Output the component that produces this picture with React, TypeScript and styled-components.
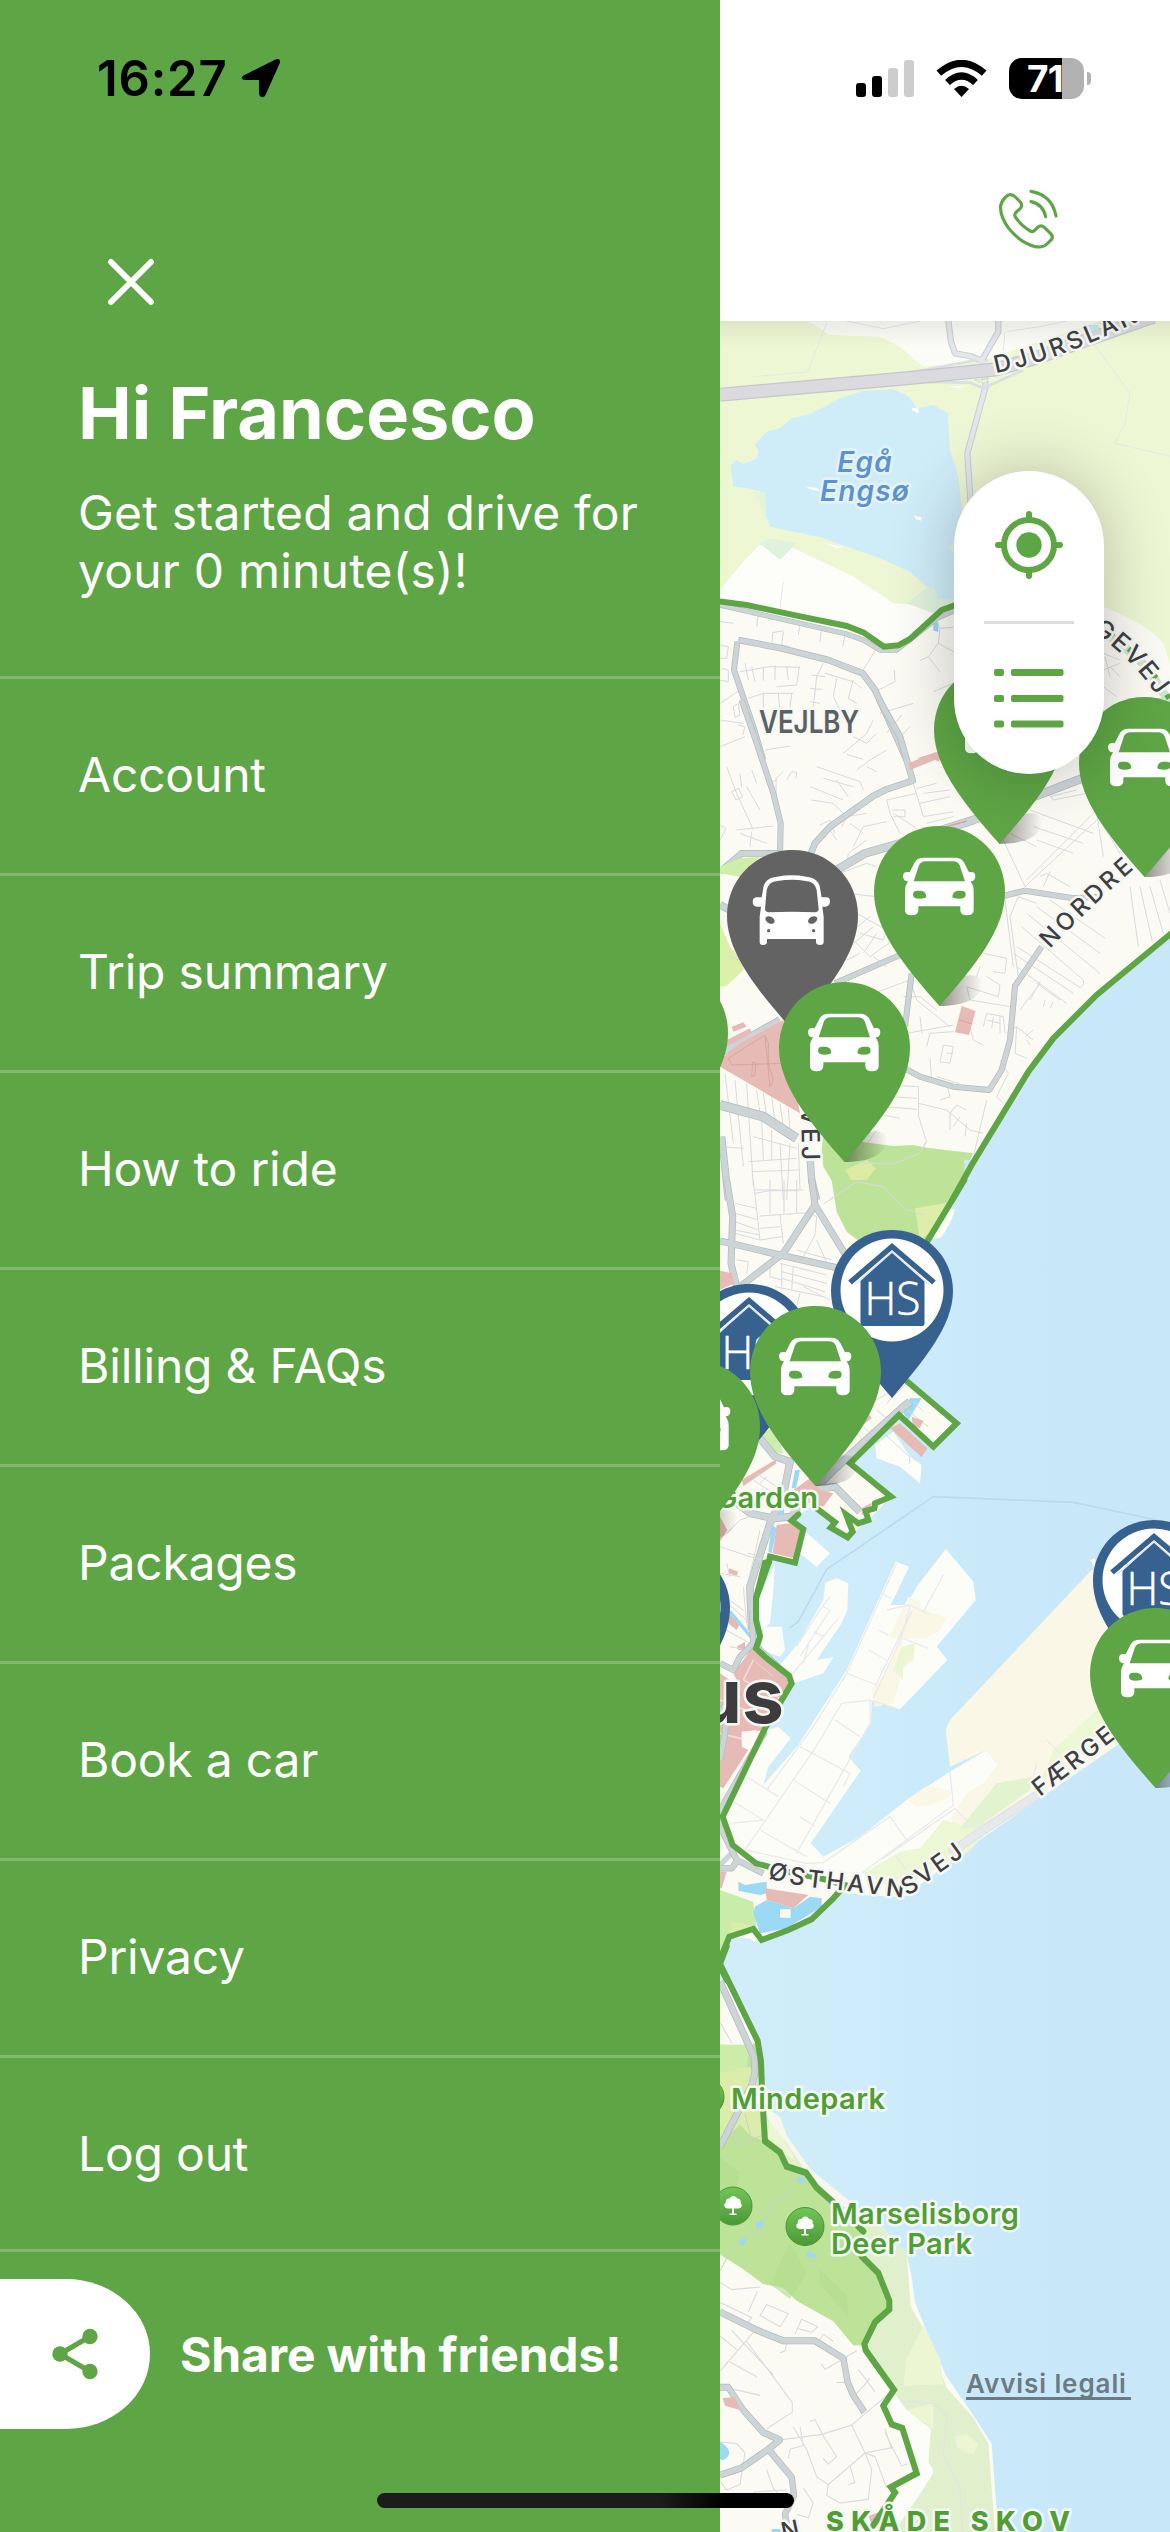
import React from "react";
import styled, { createGlobalStyle } from "styled-components";

const GREEN = "#5ea545";
const NAVY = "#37618f";
const FONT = `Inter, "Liberation Sans", sans-serif`;

const GlobalStyle = createGlobalStyle`
  * { box-sizing: border-box; }
  body { margin: 0; background: #fff; }
`;

const Screen = styled.div`
  position: relative;
  display: grid;
  grid-template-columns: 720px 450px;
  width: 1170px;
  height: 2532px;
  overflow: hidden;
  font-family: ${FONT};
`;

/* ---------- drawer ---------- */

const Drawer = styled.aside`
  display: flex;
  flex-direction: column;
  background: ${GREEN};
  color: #fff;
`;

const DrawerTop = styled.header`
  display: flex;
  flex-direction: column;
  align-items: flex-start;
  height: 676px;
  padding: 48px 60px 0 78px;
`;

const Clock = styled.div`
  display: flex;
  align-items: center;
  gap: 14px;
  height: 60px;
  padding-left: 19px;
  color: #000;
  font-size: 49px;
  font-weight: 600;
  letter-spacing: 0.8px;
`;

const CloseButton = styled.button`
  display: flex;
  margin: 150px 0 0 29px;
  padding: 0;
  border: 0;
  background: none;
`;

const Greeting = styled.h1`
  margin: 64px 0 0;
  font-size: 72px;
  line-height: 86px;
  font-weight: 700;
  letter-spacing: -0.05px;
  white-space: nowrap;
`;

const Intro = styled.p`
  margin: 28px 0 0;
  font-size: 48px;
  line-height: 58px;
  font-weight: 400;
  letter-spacing: 0.2px;
  white-space: nowrap;
`;

const Menu = styled.nav`
  display: flex;
  flex-direction: column;
`;

const MenuItem = styled.a`
  display: flex;
  align-items: center;
  height: 197px;
  padding: 0 0 3px 78px;
  border-top: 3px solid #82b96e;
  font-size: 48px;
  font-weight: 400;
  letter-spacing: -0.2px;

  &:last-child {
    padding-bottom: 0;
    border-bottom: 3px solid #82b96e;
  }
`;

const ShareRow = styled.div`
  display: flex;
  align-items: center;
  gap: 30px;
  height: 150px;
  margin-top: 27px;
`;

const ShareTab = styled.div`
  display: flex;
  align-items: center;
  width: 150px;
  height: 150px;
  padding-left: 50px;
  border-radius: 0 84px 84px 0 / 0 75px 75px 0;
  background: #fff;
`;

const ShareLabel = styled.span`
  font-size: 48px;
  font-weight: 700;
  letter-spacing: -0.15px;
  white-space: nowrap;
`;

/* ---------- right side ---------- */

const Main = styled.main`
  display: flex;
  flex-direction: column;
  min-width: 0;
`;

const TopBar = styled.header`
  display: flex;
  flex-direction: column;
  height: 321px;
  background: #fff;
`;

const StatusIcons = styled.div`
  display: flex;
  align-items: center;
  height: 60px;
  margin-top: 48px;
  padding-left: 136px;
`;

const Signal = styled.div`
  display: flex;
  align-items: flex-end;
  gap: 6px;
  height: 37px;
  margin-right: 22px;
`;

const Bar = styled.i<{ $h: number; $on?: boolean }>`
  width: 10px;
  height: ${(p) => p.$h}px;
  border-radius: 3px;
  background: ${(p) => (p.$on ? "#000" : "#ccc")};
`;

const Battery = styled.div`
  display: flex;
  align-items: center;
  justify-content: center;
  width: 75px;
  height: 41px;
  margin: 0 3px 0 22px;
  padding-right: 3px;
  border-radius: 13px;
  background: linear-gradient(90deg, #000 53px, #b1b1b1 53px);
  color: #fff;
  font-size: 37px;
  font-weight: 700;
  letter-spacing: -0.8px;
`;

const BatteryNub = styled.i`
  width: 4px;
  height: 13px;
  border-radius: 0 5px 5px 0;
  background: #b1b1b1;
`;

const CallButton = styled.button`
  display: flex;
  margin: 80px 0 0 277px;
  padding: 0;
  border: 0;
  background: none;
`;

const MapArea = styled.section`
  position: relative;
  height: 2211px;
  overflow: hidden;

  &::after {
    content: "";
    position: absolute;
    inset: 0 0 auto;
    height: 26px;
    background: linear-gradient(rgba(0, 0, 0, 0.07), rgba(0, 0, 0, 0));
  }
`;

const MapCanvas = styled.svg`
  display: block;
`;

const Pin = styled.svg<{ $x: number; $y: number }>`
  position: absolute;
  left: ${(p) => p.$x - 720}px;
  top: ${(p) => p.$y - 321}px;
  overflow: visible;
`;

const Controls = styled.div`
  position: absolute;
  left: 234px;
  top: 150px;
  display: flex;
  flex-direction: column;
  align-items: center;
  width: 150px;
  height: 303px;
  padding-top: 39px;
  border-radius: 75px;
  background: #fff;
  box-shadow: 0 0 66px rgba(0, 0, 0, 0.24);
`;

const ControlDivider = styled.i`
  width: 90px;
  height: 3px;
  margin: 41px 0 45px;
  background: #dcdcdc;
`;

const Legal = styled.a`
  position: absolute;
  left: 246px;
  top: 2047px;
  width: 165px;
  padding-top: 2px;
  border-bottom: 3px solid #6c7a83;
  color: #6c7a83;
  font-size: 26px;
  line-height: 27px;
  font-weight: 600;
  letter-spacing: 0.9px;
  white-space: nowrap;
`;

const HomeIndicator = styled.div`
  position: absolute;
  left: 377px;
  top: 2493px;
  width: 417px;
  height: 15px;
  border-radius: 8px;
  background: linear-gradient(90deg, #1c1c1c 68%, #000 84%);
`;

/* ---------- markers ---------- */

const CarPin = ({ x, y }: { x: number; y: number }) => (
  <Pin $x={x} $y={y} width="131" height="180" viewBox="0 0 131 180">
    <path d="M65 180L88 150C104 147 110 153 108 161C104 174 88 180 65 180Z" fill="url(#pinShade)" />
    <path d="M65.500 0C29 0 0 29 0 66C0 103 30 140 65.500 180C101 140 131 103 131 66C131 29 102 0 65.500 0Z" fill={GREEN} />
    <g transform="scale(.33333) translate(-463 -377)">
      <path fill="#fff" d="M612 472H706Q726 472 734 488L748 516Q767 512 767 528Q767 543 753 543Q762 556 762 570V630Q762 645 742 645Q722 645 722 630V618H596V630Q596 645 576 645Q556 645 556 630V570Q556 556 565 543Q550 543 550 528Q550 512 570 516L584 488Q592 472 612 472Z" />
      <path fill={GREEN} d="M618 483H700Q714 483 720 495L736 543H582L598 495Q604 483 618 483Z" />
      <path fill={GREEN} d="M592 571H604Q620 574 620 590Q616 595 600 595Q580 595 580 583Q580 571 592 571ZM726 571H714Q698 574 698 590Q702 595 718 595Q738 595 738 583Q738 571 726 571Z" />
    </g>
  </Pin>
);

const BusPin = ({ x, y }: { x: number; y: number }) => (
  <Pin $x={x} $y={y} width="131" height="180" viewBox="0 0 131 180">
    <path d="M65.500 0C29 0 0 29 0 66C0 103 30 140 65.500 180C101 140 131 103 131 66C131 29 102 0 65.500 0Z" fill="#636363" />
    <g transform="scale(.33333) translate(-20 -450)">
      <path fill="#fff" d="M170 530Q214 522 258 530Q298 534 300 570L304 592H318Q329 592 329 604Q329 618 316 620H306L310 650V726Q310 735 299 735Q287 735 287 726V717H140V726Q140 735 128 735Q118 735 118 726V650L122 620H110Q97 618 97 606Q97 592 110 592H124L128 570Q130 534 170 530Z" />
      <path fill="#636363" d="M172 543Q214 536 256 543Q284 545 289 570L295 628Q294 636 284 637Q214 634 146 637Q134 636 134 628L139 570Q144 545 172 543Z" />
      <g fill="#636363">
        <ellipse cx="149" cy="660" rx="15" ry="10" transform="rotate(30 149 660)" />
        <ellipse cx="277" cy="660" rx="15" ry="10" transform="rotate(-30 277 660)" />
        <circle cx="145" cy="692" r="5" />
        <circle cx="280" cy="692" r="5" />
      </g>
    </g>
  </Pin>
);

const HousePin = ({ x, y }: { x: number; y: number }) => (
  <Pin $x={x} $y={y} width="122" height="168" viewBox="0 0 122 168">
    <path d="M61 0C27 0 0 27 0 61C0 96 29 130 61 168C93 130 122 96 122 61C122 27 95 0 61 0Z" fill={NAVY} />
    <circle cx="61" cy="60" r="51.500" fill="#fff" />
    <path d="M29.500 51L61 21.500L93.500 51V94Q93.500 96 91 96H32Q29.500 96 29.500 94Z" fill={NAVY} />
    <path d="M19 52.500L61 16.500L103 52.500" fill="none" stroke={NAVY} strokeWidth="5.500" />
    <path d="M24 54.500L61 22L98 54.500" fill="none" stroke="#dfe7ef" strokeWidth="1.600" />
    <text x="33.500" y="85" fontFamily={`"Open Sans", Lato, sans-serif`} fontSize="46" fontWeight="300" fill="#fff" stroke="#fff" strokeWidth=".6" textLength="56" lengthAdjust="spacingAndGlyphs">HS</text>
  </Pin>
);

/* ---------- map drawing ---------- */

type TileProps = { y: number; sy?: number; children: React.ReactNode };
const Tile = ({ y, sy = 1 / 3, children }: TileProps) => (
  <g transform={`translate(720 ${y}) scale(.33333 ${sy})`} fill="none" strokeLinejoin="round">
    {children}
  </g>
);

const Street = ({ d, c = "#d8dade", w = 3 }: { d: string; c?: string; w?: number }) => <path d={d} stroke={c} strokeWidth={w} />;

const Road = ({ d, w = 15 }: { d: string; w?: number }) => (
  <>
    <path d={d} stroke="#b1b9c0" strokeWidth={w + 3} />
    <path d={d} stroke="#cdd4d6" strokeWidth={w - 1} />
  </>
);

const Block = ({ d }: { d: string }) => <path d={d} fill="#e6bbb6" />;

const Border = ({ d }: { d: string }) => <path d={d} stroke={GREEN} strokeWidth="18" strokeLinejoin="miter" strokeLinecap="round" />;

const halo = { paintOrder: "stroke", stroke: "#f6f8f6", strokeWidth: 5, strokeLinejoin: "round" } as const;

const RoadName = ({ id, d, size = 24, gap = 3, children }: { id: string; d: string; size?: number; gap?: number; children: string }) => (
  <>
    <path id={id} d={d} fill="none" />
    <text fontSize={size} fontWeight="500" letterSpacing={gap} fill="#3f3f3f" {...halo}>
      <textPath href={`#${id}`}>{children}</textPath>
    </text>
  </>
);

const Tree = ({ x, y }: { x: number; y: number }) => (
  <g transform={`translate(${x} ${y})`}>
    <circle r="19" fill="url(#treeFill)" stroke="#4b9436" strokeWidth="1" />
    <path d="M-5 2.500C-9 2.500-10-2-7-3.500C-8-6.500-5-8-3.500-7.500C-2-11 3-11 4-7.500C7-8 8.500-5 7.500-3C10-1 9 2.500 5 2.500L1 2.500V7.500H3.500V9H-3.500V7.500H-1V2.500Z" fill="#fff" />
  </g>
);

const CityMap = () => (
  <MapCanvas width="450" height="2211" viewBox="720 321 450 2211" fontFamily={FONT}>
    <defs>
      <linearGradient id="sea" gradientUnits="userSpaceOnUse" x1="0" x2="1350" y1="0" y2="0">
        <stop offset="0" stopColor="#d0edf9" />
        <stop offset=".3" stopColor="#ceecf9" />
        <stop offset=".6" stopColor="#c9e9fa" />
        <stop offset="1" stopColor="#c8e8fa" />
      </linearGradient>
      <linearGradient id="treeFill" x1="0" x2="0" y1="0" y2="1">
        <stop offset="0" stopColor="#72c556" />
        <stop offset="1" stopColor="#4a9a35" />
      </linearGradient>
      <linearGradient id="pinShade" x1="0" x2="1" y1="0" y2="0">
        <stop offset="0" stopColor="#000" stopOpacity=".42" />
        <stop offset="1" stopColor="#000" stopOpacity="0" />
      </linearGradient>
    </defs>

    <rect x="720" y="321" width="450" height="2211" fill="#fbfaf3" />

    {/* northern fields and lake */}
    <Tile y={310}>
      <path d="M0 0H1350V1060L1330 1000Q1280 940 1150 890L1000 830L700 880L590 890L520 880L400 800L210 710L120 705L80 745L0 840Z" fill="#eef7d4" />
      <path d="M265 33L330 75L480 80L540 110L610 170L790 150L960 95L1140 33Z" fill="#fcfcf6" />
      <path d="M0 840L80 745L120 705L210 710L400 800L520 880L700 890L720 940L500 1010L400 950L0 870Z" fill="#fdfdf9" />
      <path d="M120 700L150 685L230 700L180 750ZM560 880L640 820L720 860L700 900L640 910Z" fill="#dff2dc" />
      <path d="M32 465L50 450L70 462L110 445L115 420L103 405L140 365L180 355L215 325L270 313L370 260L430 243L520 237L565 258L590 295L640 285L683 310L690 420L715 500L730 640L720 870L655 865L640 830L620 830L570 785L480 745L380 710L300 682L150 650L138 620L135 548L85 535L40 530Z" fill="#cfedf9" />
      <path d="M575 293L597 296L595 310L578 303ZM582 616L605 622L604 632L586 628ZM258 530L290 533L300 543L275 540ZM315 700L368 710L350 716ZM683 228L735 228L715 234Z" fill="#fdfdf9" />
      <path d="M135 548L100 545L135 620ZM685 710L710 700V735Z" fill="#e4f4d6" />
      <path d="M0 890L380 975L490 1025L540 1018L690 905L720 880V1350H1350V1100L1150 960L1110 900L720 1350H0Z" fill="#fbfaf3" />
      <Street d="M320 40L262 186L100 200M380 33L490 56L600 33M855 65L850 120M860 65L960 50L1040 33M1120 100L1230 250L1215 340L1184 400L1350 438M190 816L178 905" c="#e5e6ea" />
      <path d="M685 33L693 95L705 130L750 138L800 158M835 33V65L795 135L780 160M790 170L797 230L783 280L742 430L752 580" stroke="#c9cdd2" strokeWidth="19" />
      <path d="M685 33L693 95L705 130L750 138L800 158M835 33V65L795 135L780 160M790 170L797 230L783 280L742 430L752 580" stroke="#e3e6ea" strokeWidth="13" />
      <path d="M560 190L770 150M560 215L750 218L790 235L910 180" stroke="#dcdfe2" strokeWidth="8" />
      <path d="M0 254L570 204L830 178L960 140L1100 90L1300 20" stroke="#c5c6cb" strokeWidth="42" />
      <path d="M0 254L570 204L830 178L960 140L1100 90L1300 20" stroke="#dadadf" strokeWidth="35" />
      <path d="M762 207Q782 215 805 205Q800 222 785 218Q770 217 762 207Z" fill="#eef7d4" stroke="#c9cdd2" strokeWidth="2" />
      <path d="M1105 45H1135V60L1110 65Z" fill="#c5e8f7" />
      <Street d="M0 934L40 940M115 915L110 950M240 940L235 975M305 950L300 995M375 975L368 1010M465 1022L425 1088M60 1085L150 1070L240 1072M75 1060L85 1110M95 1070L105 1115M130 1070V1112M165 1065V1110M200 1068L205 1110M238 1070L230 1125L170 1130M155 1020L158 968L190 962M190 965L185 1005L210 1010M310 1060L290 1100L280 1190M275 1095L315 1100M270 1135L305 1138M270 1175L300 1180M315 1090L400 1115L425 1135M350 1105L340 1160L360 1200M400 1110L385 1165L410 1180M85 1165L130 1150L220 1150M130 1150V1235M175 1150L180 1210M215 1150L205 1235M0 1005L25 1010L20 1045L0 1045M5 1075L25 1080V1115L0 1110M40 1190L55 1180L60 1215L45 1222ZM0 1180L60 1140M0 1230L70 1240M0 1310L75 1280M55 1245L75 1250L68 1275M475 1140L525 1115L523 1080M480 1210L580 1180M500 1270L545 1215M530 1290L570 1250M370 1330L440 1270L460 1230M380 1333L430 1348M400 1280L440 1300L470 1270M135 1320L210 1308M650 935L660 955L700 952M660 955L655 1000L625 1040L600 1052M625 1040L660 1085M655 1000L710 1030M700 1120L640 1145" c="#d6d8de" />
      <Street d="M1150 1030L1200 1050M1150 1080L1200 1060M1155 1040L1170 1100M1150 1130L1190 1160M1200 1100L1170 1070" />
      <Road d="M0 885L130 915L380 972L430 990L480 1020H530L600 965L650 925L720 895" w={13} />
      <Road d="M55 990L180 1014L325 1050L428 1090L465 1140L520 1260L560 1350" w={17} />
      <Road d="M52 995L42 1080L100 1250L130 1350" w={15} />
      <path d="M640 940L655 935V965L640 962Z" fill="#9dd6f2" />
      <path d="M590 1345L655 1325L660 1350Z" fill="#e6bbb6" />
      <Border d="M-10 873L80 885L230 917L380 948L430 967L492 1010L535 1006L570 987L665 900L720 880" />
      <path d="M1120 945L1200 1000L1280 1070L1350 1180" stroke="#cfe3cb" strokeWidth="26" />
      <path d="M1170 970L1230 1020L1310 1105L1350 1170" stroke={GREEN} strokeWidth="16" strokeDasharray="14 22" />
    </Tile>

    {/* Vejlby and the northern coast */}
    <Tile y={700}>
      <Street d="M200 240L215 215L230 217L228 235M168 300V235L190 215M145 250L170 240M20 200L50 280L100 390M60 220L65 260M95 210L110 250M80 260L120 330M35 275L55 265L68 290L48 300ZM0 375L18 385L0 420M50 390L160 378M60 400L140 430M90 440L95 395M290 200L420 245L430 270M310 235L400 260M270 260L370 300M275 300L340 310L370 340M350 240L385 290M300 375L330 360L345 400M330 390L350 420M365 380L380 350L440 340M390 370L430 400M400 440L430 380L500 365M380 500L385 460L440 420M500 300L590 280M500 300L510 340L540 400M515 330H555V350H520M520 340L590 385M580 250L610 350L700 335M590 265L650 250M600 310L690 290M610 280L690 270M620 370L700 350M410 210L450 180L500 150M440 200L470 215M360 520L440 490L470 500M380 580L470 590M410 640L500 690L490 720L420 700M400 690L450 650M390 740L460 680M400 720L450 770L520 720M430 760L470 700M460 770L500 800M380 780L420 760M340 850L380 910L570 840M570 840L590 900L690 980M550 890L600 890L650 930M600 950L606 1000M560 1000L700 975M630 1075L635 1140M620 1040L630 1000L700 995M670 1035L700 1040L690 1090L660 1085ZM680 1060H700M790 760L860 775L855 820L820 815M780 800L770 830M800 830L840 855L835 890L740 860M740 860L750 900L870 920M790 980L800 940L850 950L855 1000M800 960L840 970M820 950L815 985M840 950V1000M745 960L760 1020L790 1035M870 650L895 590L950 610M870 650L895 830M850 560L880 800M905 680L1090 840Q1095 860 1080 862L890 740M880 760L1060 880M920 640L1140 820M950 620L1140 760M990 600L1155 715M890 800L1040 910M950 850L1020 900M960 845L930 900M970 920L975 900M990 925L1000 905M900 930L960 850M885 1060L890 980L940 1020M885 1060L920 1075M915 1010L940 990M930 1035L920 1020M860 1000L890 980M840 1080L865 1120L830 1190L850 1210M800 1200L760 1370M500 1155L595 1160L596 1250L620 1325L600 1360L520 1392L425 1390L415 1370L470 1290M595 1210L680 1230L750 1290L790 1300M690 1290V1240L710 1215L740 1230M720 1250L700 1280M740 1270L735 1310M510 1190L590 1195M495 1220L590 1228M490 1245L540 1255M650 1130L715 1150L720 1170M680 1150L690 1190L660 1200M850 420L915 560M920 540L1130 330M915 560L1130 360M930 330L1120 400M940 380L1090 430M950 420L1060 460M960 530L980 520L1050 560M990 515L970 560M870 400L950 440M1130 340L1150 470M1140 360L1200 460M1230 560L1255 740M1260 560L1297 725M1290 560L1330 700M1320 540L1350 640M990 290L1070 270M985 280L1000 300L1100 280" />
      <Road d="M65 0L110 130L160 280L182 370L180 460" w={15} />
      <Road d="M478 0L540 110L578 242L500 268L460 288L330 380L285 430L265 480" w={17} />
      <Road d="M0 515L65 460H182" w={17} />
      <Road d="M350 510L435 460L540 430L760 360L1100 230" w={23} />
      <Road d="M345 850L540 765M850 588L915 572L1060 595L1130 590M965 740L885 858L870 1020L845 1110L808 1170L700 1160L600 1130L550 1103M575 820L555 980" w={15} />
      <path d="M565 190L645 157L660 165L658 185L645 180L570 210Z" fill="#e6bbb6" />
      <path d="M680 380L740 363" stroke="#dd9d98" strokeWidth="4" />
      <path d="M725 918L767 933L747 1005L705 997Z" fill="#e6bbb6" />
      <path d="M717 960L757 972" stroke="#dc9f9a" strokeWidth="3" />
      <path d="M0 500L60 475L120 470L60 530L0 520Z" fill="#cfeeaa" />
      <path d="M0 670L30 740L70 790V810L20 858L0 860Z" fill="#ddf0a9" />
      <Road d="M0 615L30 630M0 1060L180 960" w={20} />
      <path d="M0 1080L60 1030L190 960L240 1240L0 1100Z" fill="#e6bbb6" />
      <path d="M35 980L70 967L80 980L40 995ZM20 1020L90 985L95 1000L20 1040Z" fill="#e6bbb6" />
      <Street d="M25 1075L135 1005L145 1030V1090L160 1140L150 1160L135 1010M25 1075L35 1095L190 1090M95 1130L98 1085L108 1090L105 1125Z" c="#d6a5a5" />
      <Street d="M20 765L70 785M15 1120L40 1330M45 1140L70 1400M80 1150L100 1460M110 1170L120 1240M130 1180L140 1250M155 1190L165 1265M180 1210L190 1280M205 1225L210 1290M0 1340L70 1345M85 1385L230 1375M95 1415L240 1410M100 1470L250 1470M180 1330L190 1500M210 1330L200 1500M235 1330L240 1470M125 1260L130 1380M155 1290V1380M100 1310L230 1345" />
      <Road d="M0 1215L130 1250L230 1315" w={26} />
      <Road d="M5 1310L25 1500M270 1370L275 1440L290 1500" w={19} />
      <path d="M310 1300L380 1320L520 1338L580 1335L620 1343L760 1360L695 1500H348L340 1450L310 1400L305 1350Z" fill="#bce397" />
      <path d="M375 1410L440 1380L468 1405L440 1440L395 1440Z" fill="#ddecA5" />
      <Street d="M330 1500L415 1440L490 1460L530 1500M415 1370L425 1390L520 1392L600 1360L618 1325" />
      <path d="M1350 715L1130 893L1005 1020L930 1120L845 1260L702 1500H1350Z" fill="url(#sea)" />
    </Tile>

    {/* city centre and harbour front */}
    <Tile y={1180}>
      <path d="M733 -60H1350V1350H100L108 1255L150 1130L225 1148L250 1048L215 1022L280 975L345 1027L383 1072L445 1020L513 950L390 850L537 705L640 800L710 730L560 600L620 185L735 0Z" fill="url(#sea)" />
      <path d="M335 0H733L620 185H420L380 155L350 95Z" fill="#bce397" />
      <path d="M585 85L680 68L690 45L640 150L600 180Z" fill="#ddedaa" />
      <path d="M680 85L705 90L690 130L665 172L625 180Z" fill="#fdfdf9" />
      <Street d="M310 72L410 5L490 20L555 88L615 105M100 0L120 180M105 40L150 32H230M150 0V100M192 0V100M230 0V100M120 108L265 98M265 98L290 110L285 165L245 240M120 145L180 140M120 180L185 170M180 105L190 190M45 70L110 85M45 100L110 118M45 125L115 150M45 150L120 165M45 160L120 180M50 240L85 245L80 280M290 180L330 270M230 210L335 240M180 250L320 285M185 275L320 310M185 295L315 335M150 260V290L185 300M185 250V320M220 260L215 330M165 320L310 350M250 320L330 360M240 340L230 380" />
      <Road d="M20 0L38 110L33 250L55 340M0 183L180 225L380 270M275 0L285 75L190 220L60 320M285 75L380 230" w={18} />
      <Block d="M0 272L35 280L42 310L0 330ZM430 720L450 705L455 715L430 735Z" />
      <path d="M125 760L165 740L190 820L160 820Z" fill="#cdeeac" />
      <path d="M570 655L605 655L565 720L550 700Z" fill="#9bd9f5" />
      <Street d="M560 690L625 740M580 665L610 695M450 670L540 620M430 740L480 790M410 760L460 810M395 840L540 690M500 670L560 610M470 690L520 730" />
      <Road d="M570 665L540 690L340 870L280 930" w={22} />
      <Road d="M120 775L165 830L210 845L195 920L165 1000L150 1030L90 1220L95 1350M0 930L90 1000L160 1015L215 1010L270 930L345 920L420 995" w={20} />
      <path d="M225 870L240 870L228 925L215 925ZM178 960H192V1005H178ZM155 1035L170 1045L155 1120L145 1115Z" fill="#9bd9f5" />
      <Block d="M220 930L270 895L300 930L340 940L310 980L270 970L235 960ZM170 1035L210 1030L245 1050L222 1135L158 1120ZM65 900L165 840L170 850L70 918ZM575 710L610 722L600 745L578 738ZM0 1010L22 1050L0 1085ZM28 1165L55 1175L50 1187L25 1180ZM425 985L455 968L445 1000L425 1005Z" />
      <path d="M465 795L520 755L570 830L605 855L600 910L540 860L470 835Z" fill="#fdfdf9" />
      <Block d="M510 745L540 730L622 805L605 832Z" />
      <Street d="M100 900L160 940M110 880L170 920M120 910L140 890M0 1100L90 1130L150 1145M85 1200L100 1140L120 1050M20 1060L60 1020L90 1010M0 1180L60 1190M20 1150L30 1190M0 1240L70 1290M85 1120L110 1125M470 740L568 830L570 850" />
      <path d="M200 1350L235 1325L320 1168L640 950L1060 967L1310 1020" stroke="#b9dbed" strokeWidth="5" />
      <path d="M250 1050L330 1120L290 1160L240 1120ZM165 1150L160 1230L150 1330L125 1350L115 1260Z" fill="#fdfdf9" />
      <Border d="M733 0L620 187M560 603L710 730L640 800L537 705L390 850L513 950L465 970L463 985L437 993L445 1020L415 1030L378 1003L398 1055L383 1072L332 1043L345 1027L290 985M235 1003L215 1022L250 1048L225 1148L150 1130L147 1145L135 1148L108 1255V1330" />
    </Tile>

    {/* docks */}
    <Tile y={1500}>
      <path d="M108 385H1350V1440H0V1390L28 1310L125 1320L205 1290L340 1195L375 1155L108 1090L8 950L215 550L108 445Z" fill="url(#sea)" />
      <path d="M350 235L385 250L382 330L365 370L290 480L340 472L310 520L215 552L180 495L235 430L310 300L315 248ZM130 380L185 380L195 450L180 470L125 450ZM527 185L567 200L512 315L560 315L590 260L678 147L760 245L767 300L650 440L682 480L540 628L455 600L453 670L385 770L422 812L272 1030L310 1070L420 1010L560 900L690 815L800 750L832 795L765 900L940 860L765 1030L550 1192L430 1185L360 1175L108 1090L8 950L140 690L175 680L212 715L145 800L130 855L235 735L380 510Z" fill="#fdfdf8" />
      <path d="M1115 210L690 660L677 690L690 800L800 750L832 795L790 850L740 880L690 960L765 1030L1200 730L1350 600V200Z" fill="#faf7e7" />
      <path d="M565 290L600 300V325L680 355L660 390L620 415H550L540 540L520 610L465 620L455 570L500 520L540 420L510 410ZM560 900L620 858L690 870V890L640 915L590 920Z" fill="#faf7e7" />
      <path d="M545 440L585 430L580 480L550 500L548 540L520 510Z" fill="#ecf6d5" />
      <path d="M430 1120L540 1055L600 1045L670 960L760 985L840 960L740 1060L600 1130L545 1180ZM1000 750L1130 630L1180 680L960 850Z" fill="#ecf7d3" />
      <path d="M720 985L830 850L940 830L930 870L770 985Z" fill="#e2f3cf" />
      <path d="M1110 180L1125 175V205ZM150 1150L180 1155L170 1160Z" fill="#fdfdf9" />
      <Street c="#eaeaec" w={4} d="M530 190L380 520L280 680L140 870M670 225L610 335M485 280L515 295M500 330L570 315L630 345M570 320L545 410L460 595M575 335L465 560M475 390L505 405M445 450L500 480M380 520L470 555M550 415L625 445M450 600L365 610L285 745L75 1050M450 600L530 625M450 600V670L230 1060M345 660L420 710M240 740L390 820M220 840L330 910M390 820L370 860M80 830L175 890M40 905L130 960L30 970M120 990L260 1070M240 950L285 980M75 1050L260 1090L310 1088L510 950L560 1020M425 1120L700 915L690 815M490 1075L705 925L765 990L930 885M980 720L1020 760M950 790L940 830M310 320L330 330L240 470M330 290L300 330L230 440M355 355L215 525M280 395L310 410M265 435L250 490M525 1065L560 1110" />
      <path d="M690 1060L760 1010L960 880" stroke="#d8dbde" strokeWidth="27" />
      <path d="M690 1060L760 1010L960 880" stroke="#e6e9ec" strokeWidth="23" />
      <path d="M0 1170L100 1205L110 1290L28 1310L0 1385Z" fill="#c9ecaa" />
      <path d="M35 1265L95 1275L100 1290L28 1310Z" fill="#daeeab" />
      <path d="M55 1145L75 1155L140 1145V1180L120 1185L55 1172ZM105 1220L140 1200L220 1225L270 1190L305 1195V1220L200 1285L120 1300L100 1240Z" fill="#9bd9f5" />
      <path d="M180 1228H212V1253H180ZM92 1300L115 1328L93 1320Z" fill="#fbfaf3" />
      <path d="M0 1095L45 1050" stroke="#cdd4d6" strokeWidth="16" />
      <Block d="M135 1165L265 1185L220 1225L140 1200ZM0 1115L20 1115L5 1165H0ZM85 440L130 460L200 525L215 560L135 690L70 700L65 740L85 750L10 865L0 860V520L60 560L40 520L85 460ZM25 340L60 370L50 390L25 370ZM50 440L75 425V450H55Z" />
      <Street c="#f3dcd9" w={5} d="M0 600L100 640M0 700L80 720M40 560L20 700M100 480L70 540L190 600" />
      <path d="M65 695L110 690L90 740L65 730Z" fill="#fbfaf3" />
      <path d="M30 335L92 410" stroke="#9bd9f5" strokeWidth="10" />
      <Street d="M0 290L90 370M0 380L90 430M30 440L80 450M70 260L80 370M100 480L160 530" />
      <Road d="M98 330V400L100 430L60 470L40 510L0 490M100 430L205 530M0 640L20 610L15 700L0 780M135 695L0 930V980L50 1080L130 1120M0 1105H35L55 1080" w={16} />
      <path d="M135 695L0 950" stroke="#cdd4d6" strokeWidth="14" />
      <Border d="M147 185L108 295V360L120 410L108 445L140 475L207 527L215 550L135 685L8 950L38 1035L108 1090L200 1115L310 1137L375 1155L340 1195L275 1258L205 1290L125 1320L100 1287L28 1310L0 1378V1400L20 1440" />
    </Tile>

    {/* southern forest and suburbs */}
    <Tile y={1950} sy={0.37117}>
      <path d="M10 0L0 35L113 245L130 340L145 430L180 450L200 500L270 590L380 670L490 750L560 820L575 880L585 950L640 1070L680 1150L750 1240L815 1330L835 1568H1350V0Z" fill="url(#sea)" />
      <path d="M0 255L90 258L125 330L140 440L180 450L200 500L270 590L380 670L490 750L560 820L572 960L610 1020L640 1080L680 1180L760 1260L805 1330L825 1568H520L590 1480L640 1400L625 1380L632 1290L560 1240L520 1190L430 1070L400 1065L340 1000L230 945L190 910L130 900L70 860L0 820Z" fill="#e0f0cc" />
      <path d="M140 440L180 450L200 500L270 590L380 670L490 750L350 680L260 600L200 520L150 470Z" fill="#f7f6ef" />
      <path d="M560 1100L610 1010L660 1100L670 1170L550 1175ZM560 1240L640 1220V1290ZM705 1310L740 1303L775 1330L760 1360L710 1340ZM150 460L190 510L230 570L140 520Z" fill="#edf6d3" />
      <path d="M0 255L90 258L113 245L127 400L135 515L180 545L200 583L258 600L340 680L425 755V825L475 870L508 945V968L465 1003L433 1062L400 1065L340 1000L230 945L190 910L130 900L70 860L0 820Z" fill="#bce397" />
      <path d="M0 255H90L80 320L0 330ZM0 330Z" fill="#cdecaa" />
      <path d="M0 330L90 315L127 350L135 515L90 500L60 470L0 520V400Z" fill="#dcedab" />
      <path d="M210 790L260 870L210 940L150 900ZM300 860L380 930L385 990L300 900ZM0 560L60 600L30 700L0 720Z" fill="#b2dc90" opacity=".6" />
      <Street c="#c9d3c4" d="M235 605L198 662L160 683L118 752L55 782L20 830L0 865M75 440L95 512L62 530L42 490M95 512L125 500" />
      <path d="M232 615L255 610V625L235 628ZM108 735L130 728L128 745L110 752ZM55 785L80 775L75 792L60 796ZM258 812L290 820L292 830L262 828Z" fill="#9bd9f5" />
      <Street c="#e2e5df" w={4} d="M545 1215L640 1222L680 1255L670 1360L720 1450L728 1568" />
      <Street d="M0 195L35 250M0 895L35 915L122 908M112 920L85 975M120 985L140 955L205 980L180 1015ZM225 1035L245 995L293 1015L275 1030L235 1020M300 1050L310 1035L340 1055M0 950L95 990L80 1010M0 1040L55 1080M35 1025L160 1145M100 1030L0 1135M80 1055L160 1150L217 1220V1245L140 1290M30 1110L110 1150M0 1175L120 1200M200 1060L195 1080L180 1085M410 1080L315 1130L305 1115M415 1130L465 1190M450 1155L400 1205M385 1165L350 1165M180 1320L305 1305L395 1280L520 1185M220 1285L260 1345L290 1420L325 1440M270 1270L285 1265L310 1310L350 1365L325 1385L310 1370M240 1285L250 1335L210 1345L205 1370M395 1280L435 1355L520 1340M435 1355L325 1440L320 1470L360 1490L445 1480L455 1400L435 1355M435 1355L465 1365L500 1450M495 1300L545 1390L560 1385M515 1345L495 1290M390 1390L405 1435L385 1440M280 1490L265 1530L230 1520M280 1490L250 1450M0 1325L50 1330L75 1355L60 1440L20 1455L0 1430M140 1400L160 1450L190 1480M100 1460L200 1455" />
      <Road d="M0 85L103 290L105 330L95 365L0 530" w={18} />
      <Road d="M0 975L105 1022L190 1053H285L370 1100L383 1165L400 1200L433 1245M0 1178H25L70 1240L130 1300L180 1320L145 1345L65 1395L0 1415M145 1345L215 1420L222 1470L195 1520L205 1568" w={16} />
      <Block d="M8 1207L45 1205L62 1240L15 1228ZM445 1525L475 1515L460 1560Z" />
      <path d="M0 1325Q30 1340 28 1358Q15 1380 0 1372ZM155 1560H185V1568H155Z" fill="#9bd9f5" />
      <path d="M520 1190L560 1240L632 1290L625 1380L640 1410L590 1480L520 1550L460 1550L590 1410L520 1270L490 1228Z" fill="#fcfcf8" />
      <Border d="M20 -10L0 37L113 245L123 300L127 400L135 515L180 545L200 583L258 600L290 640L340 680M415 745L430 758M425 825L475 870L508 945V968L465 1003L433 1062L437 1078L522 1185L490 1228L515 1278L547 1288L590 1410L513 1447L525 1462L460 1550" />
    </Tile>

    <Tile y={700}>
      <Border d="M1360 695L1130 885L1000 1015L925 1115L840 1255L755 1395L695 1503" />
    </Tile>

    {/* labels */}
    <RoadName id="djursland" d="M996 373Q1060 361 1170 306" gap={3.4}>DJURSLAND</RoadName>
    <RoadName id="grenaavej" d="M1092 632Q1134 658 1168 712" size={25} gap={2.6}>GEVEJ</RoadName>
    <RoadName id="nordre" d="M1050 949Q1092 905 1142 862" gap={3.4}>NORDRE</RoadName>
    <RoadName id="vej" d="M801 1108L803 1200" size={25} gap={2.600}>VEJ</RoadName>
    <RoadName id="faerge" d="M1040 1797L1125 1731" gap={3}>FÆRGEVEJ</RoadName>
    <RoadName id="osthavn" d="M767 1878Q800 1887 830 1889L898 1897Q915 1895 930 1880L990 1837" gap={3.3}>ØSTHAVNSVEJ</RoadName>
    <g fontSize="28" fontStyle="italic" fontWeight="600" letterSpacing="1.200" textAnchor="middle" fill="#5c92d0" {...halo} stroke="#e4f3fa">
      <text x="865" y="472">Egå</text>
      <text x="865" y="501">Engsø</text>
    </g>
    <text x="759" y="733" fontSize="31" fontWeight="600" fill="#5c6062" textLength="100" lengthAdjust="spacingAndGlyphs" {...halo}>VEJLBY</text>
    <text x="784" y="1723" fontSize="75" fontWeight="700" fill="#3c3c3c" textAnchor="end" {...halo}>Aarhus</text>
    <g fill="#4f9f33" fontWeight="600" fontSize="29" {...halo}>
      <text x="818" y="1508" textAnchor="end">Botanical Garden</text>
      <text x="731" y="2109" textLength="154">Mindepark</text>
      <text x="831" y="2224" textLength="188">Marselisborg</text>
      <text x="831" y="2254" textLength="141">Deer Park</text>
      <text x="826" y="2531" fontSize="27" fontWeight="800" textLength="244">SKÅDE SKOV</text>
    </g>
    <text x="783" y="2540" fontSize="24" fontWeight="500" fill="#3f3f3f" transform="rotate(-12 783 2540)" {...halo}>N</text>
    <Tree x={705} y={2097} />
    <Tree x={733} y={2206} />
    <Tree x={805} y={2226.5} />
  </MapCanvas>
);

const MENU = ["Account", "Trip summary", "How to ride", "Billing & FAQs", "Packages", "Book a car", "Privacy", "Log out"];

export default function App() {
  return (
    <>
      <GlobalStyle />
      <Screen>
        <Drawer>
          <DrawerTop>
            <Clock>
              16:27
              <svg width="40" height="40" viewBox="0 0 40 40">
                <path d="M3.500 17L34.500 1.500Q40-.5 38.800 5L24.500 37Q22.500 40.500 19.500 38.500Q18 37.500 18 35V22H4.500Q1 22 .8 19.500Q.8 18 3.500 17Z" />
              </svg>
            </Clock>
            <CloseButton aria-label="Close">
              <svg width="48" height="48" viewBox="0 0 48 48" stroke="#fff" strokeWidth="6" strokeLinecap="round">
                <path d="M4 4L44 44M44 4L4 44" />
              </svg>
            </CloseButton>
            <Greeting>Hi Francesco</Greeting>
            <Intro>
              Get started and drive for
              <br />
              your 0 minute(s)!
            </Intro>
          </DrawerTop>
          <Menu>
            {MENU.map((label) => (
              <MenuItem key={label}>{label}</MenuItem>
            ))}
          </Menu>
          <ShareRow>
            <ShareTab>
              <svg width="50" height="52" viewBox="0 0 50 52" fill={GREEN}>
                <path d="M10 26L40 8.500M10 26L40 43.500" stroke={GREEN} strokeWidth="5" />
                <circle cx="10" cy="26" r="7.700" />
                <circle cx="40" cy="8.500" r="7.700" />
                <circle cx="40" cy="43.500" r="7.700" />
              </svg>
            </ShareTab>
            <ShareLabel>Share with friends!</ShareLabel>
          </ShareRow>
        </Drawer>

        <Main>
          <TopBar>
            <StatusIcons>
              <Signal>
                <Bar $h={14} $on />
                <Bar $h={21} $on />
                <Bar $h={29} />
                <Bar $h={37} />
              </Signal>
              <svg width="51" height="37" viewBox="0 0 51 37">
                <path d="M25.500 37L18 29Q25.500 22.500 33 29Z" />
                <path d="M11.500 22.500Q25.500 9.500 39.500 22.500" fill="none" stroke="#000" strokeWidth="7" />
                <path d="M2.800 13.200Q25.500-6.500 48.200 13.200" fill="none" stroke="#000" strokeWidth="7" />
              </svg>
              <Battery>71</Battery>
              <BatteryNub />
            </StatusIcons>
            <CallButton aria-label="Call">
              <svg width="62" height="62" viewBox="890 564 186 186" fill="none" stroke={GREEN} strokeWidth="9.500" strokeLinecap="round" strokeLinejoin="round">
                <path d="M930 584Q938 584 945 591L960 606Q968 616 960 625L946 638Q941 645 946 652Q963 678 990 693Q997 697 1003 691L1012 682Q1022 673 1032 682L1051 701Q1060 710 1053 719L1040 732Q1028 744 1005 740Q960 728 925 685Q898 648 901 618Q902 605 915 592Q923 584 930 584Z" />
                <path d="M992 574Q1055 585 1067 648M992 605Q1027 612 1036 650" />
              </svg>
            </CallButton>
          </TopBar>
          <MapArea>
            <CityMap />
            <CarPin x={934.3} y={664} />
            <CarPin x={1078.5} y={697} />
            <CarPin x={874.3} y={825.7} />
            <BusPin x={726.7} y={850} />
            <CarPin x={596.5} y={967} />
            <CarPin x={778.5} y={981.7} />
            <HousePin x={831} y={1229.5} />
            <HousePin x={688} y={1284} />
            <CarPin x={629} y={1360.7} />
            <CarPin x={749.5} y={1305.7} />
            <HousePin x={1093} y={1519.5} />
            <HousePin x={608} y={1547} />
            <CarPin x={1089.5} y={1608.3} />
            <Controls>
              <svg width="70" height="70" viewBox="0 0 70 70" fill="none" stroke={GREEN} strokeWidth="6" strokeLinecap="round">
                <circle cx="35" cy="35" r="25" />
                <circle cx="35" cy="35" r="12.700" fill={GREEN} stroke="none" />
                <path d="M35 4V9M35 61V66M4 35H9M61 35H66" />
              </svg>
              <ControlDivider />
              <svg width="70" height="60" viewBox="0 0 70 60" fill={GREEN}>
                {[0, 26, 51.5].map((y) => (
                  <g key={y}>
                    <rect x="0" y={y} width="10" height="7" rx="2" />
                    <rect x="17" y={y} width="52.500" height="7" rx="2" />
                  </g>
                ))}
              </svg>
            </Controls>
            <Legal>Avvisi legali</Legal>
          </MapArea>
        </Main>
        <HomeIndicator />
      </Screen>
    </>
  );
}
